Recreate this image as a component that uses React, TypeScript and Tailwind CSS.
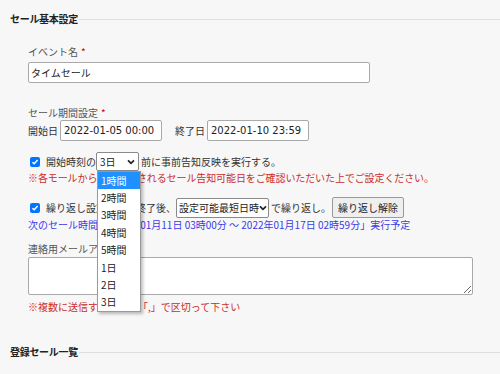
import React from "react";

const Check = () => (
  <span className="inline-flex items-center justify-center w-[10px] h-[10px] rounded-[2px] bg-[#0075ff] shrink-0">
    <svg width="8" height="8" viewBox="0 0 10 10">
      <polyline points="1.8,5.2 4,7.3 8.3,2.6" fill="none" stroke="white" strokeWidth="1.8" />
    </svg>
  </span>
);

const Chevron = () => (
  <svg width="8" height="6" viewBox="0 0 8 6" className="shrink-0">
    <polyline points="1,1.3 4,4.3 7,1.3" fill="none" stroke="#222" strokeWidth="1.7" />
  </svg>
);

const Req = () => <span className="text-[#c00] ml-[3px]">*</span>;

export default function App() {
  const items = ["1時間", "2時間", "3時間", "4時間", "5時間", "1日", "2日", "3日"];
  return (
    <div className="relative w-[500px] h-[374px] overflow-hidden bg-[#f7f7f7] text-[10px] leading-[14px] text-[#333] font-['Noto_Sans_CJK_JP',sans-serif]">
      <div className="pt-[12px] pl-[10px]">
        <div className="flex items-center">
          <span className="font-bold text-[#222] tracking-[-0.3px]">セール基本設定</span>
          <div className="flex-1 h-px bg-[#dedede] ml-[1px]" />
        </div>

        <div className="pl-[18px]">
          <div className="mt-[19px] text-[#555]">
            イベント名<Req />
          </div>
          <input
            readOnly
            value="タイムセール"
            className="block mt-[3px] w-[342px] h-[21px] px-[2px] bg-white border border-[#a9a9a9] rounded-[2px] outline-none text-[10px] text-[#222] font-['DejaVu_Sans','Noto_Sans_CJK_JP',sans-serif]"
          />

          <div className="mt-[23px] text-[#555]">
            セール期間設定<Req />
          </div>
          <div className="flex items-center h-[21px]">
            <span className="text-[#333]">開始日</span>
            <div className="ml-[2px] w-[102px] h-[21px] flex items-center px-[3px] bg-white border border-[#a9a9a9] rounded-[2px] text-[#222] whitespace-nowrap font-['DejaVu_Sans',sans-serif]">
              2022-01-05 00:00
            </div>
            <span className="ml-[13px] text-[#333]">終了日</span>
            <div className="ml-[2px] w-[102px] h-[21px] flex items-center px-[3px] bg-white border border-[#a9a9a9] rounded-[2px] text-[#222] whitespace-nowrap font-['DejaVu_Sans',sans-serif]">
              2022-01-10 23:59
            </div>
          </div>

          <div className="mt-[11px] flex items-center h-[19px] whitespace-nowrap">
            <span className="ml-[2px]"><Check /></span>
            <span className="ml-[6px]">開始時刻の</span>
            <div className="w-[43px] h-[19px] flex items-center justify-between pl-[3px] pr-[3px] bg-white border border-[#8a8a8a] rounded-[2px] text-[#222]">
              <span>3日</span>
              <Chevron />
            </div>
            <span className="ml-[2px]">前に事前告知反映を実行する。</span>
          </div>
          <div className="text-[#cc2d2d] whitespace-nowrap tracking-[-0.1px]">
            ※各モールから公式発表されるセール告知可能日をご確認いただいた上でご設定ください。
          </div>

          <div className="mt-[12px] flex items-center h-[21px] whitespace-nowrap">
            <span className="ml-[2px]"><Check /></span>
            <span className="ml-[6px]">繰り返し設定：前回終了後、</span>
            <div className="w-[93px] h-[20px] flex items-center justify-between pl-[2px] pr-[1px] bg-white border border-[#8a8a8a] rounded-[2px] text-[#222]">
              <span>設定可能最短日時</span>
              <Chevron />
            </div>
            <span className="ml-[2px]">で繰り返し。</span>
            <div className="ml-[1px] h-[21px] px-[5px] flex items-center bg-[#efefef] border border-[#9a9a9a] rounded-[2px] text-[#222]">
              繰り返し解除
            </div>
          </div>
          <div className="text-[#3b3be8] whitespace-nowrap">
            次のセール時間「2022年01月11日 03時00分 ～ 2022年01月17日 02時59分」実行予定
          </div>

          <div className="mt-[10px] text-[#555]">
            連絡用メールアドレス<Req />
          </div>
          <textarea
            readOnly
            className="block mt-[1px] w-[445px] h-[38px] bg-white border border-[#a9a9a9] rounded-[2px] outline-none"
          />
          <div className="mt-[5px] text-[#cc2d2d]">
            ※複数に送信する場合は「,」で区切って下さい
          </div>
        </div>

        <div className="mt-[31px] flex items-center">
          <span className="font-bold text-[#222] tracking-[-0.3px]">登録セール一覧</span>
          <div className="flex-1 h-px bg-[#dedede] ml-[1px]" />
        </div>
      </div>

      <div className="absolute left-[97px] top-[171px] w-[44px] bg-white border border-[#9a9a9a] shadow-[2px_2px_3px_rgba(0,0,0,0.25)]">
        {items.map((it, i) => (
          <div
            key={i}
            className={
              "h-[17.4px] flex items-center pl-[3px] " +
              (i === 0 ? "bg-[#1e90ff] text-white" : "text-[#222]")
            }
          >
            {it}
          </div>
        ))}
      </div>
    </div>
  );
}
